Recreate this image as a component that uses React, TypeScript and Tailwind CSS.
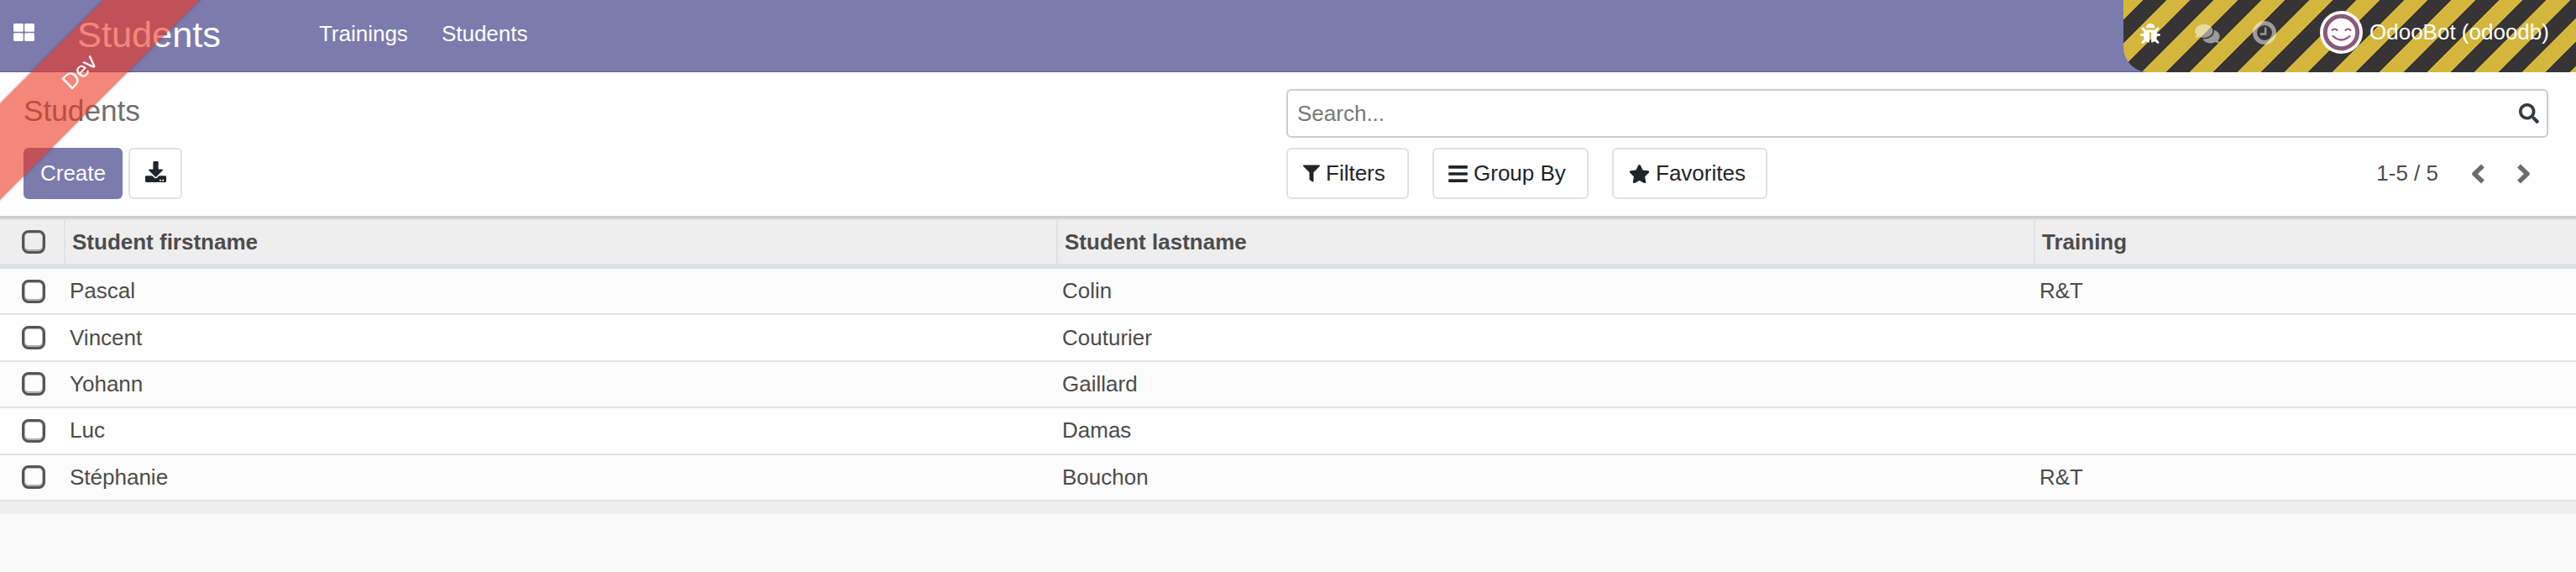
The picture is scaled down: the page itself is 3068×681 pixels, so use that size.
import React from 'react';
import { FaBug, FaComments, FaDownload, FaFilter, FaBars, FaStar, FaSearch } from 'react-icons/fa';

const students = [
  { firstname: 'Pascal', lastname: 'Colin', training: 'R&T' },
  { firstname: 'Vincent', lastname: 'Couturier', training: '' },
  { firstname: 'Yohann', lastname: 'Gaillard', training: '' },
  { firstname: 'Luc', lastname: 'Damas', training: '' },
  { firstname: 'Stéphanie', lastname: 'Bouchon', training: 'R&T' },
];

const Checkbox = () => (
  <span className="block w-7 h-7 rounded-lg border-[3px] border-[#555] shadow-[inset_0_0_0_1px_#b4b7bc,inset_0_-1px_0_1px_#a4a7ad]" />
);

const Avatar = () => (
  <svg viewBox="0 0 51 51" className="w-[51px] h-[51px]">
    <circle cx="25.5" cy="25.5" r="25.5" fill="#fff" />
    <circle cx="25.5" cy="25.5" r="19.2" fill="#fff" stroke="#875a7b" strokeWidth="5" />
    <path d="M14.5 23q3-3 6 0M30.5 23q3-3 6 0" fill="none" stroke="#875a7b" strokeWidth="2" strokeLinecap="round" />
    <path d="M15.5 30q10 9 20 0" fill="none" stroke="#875a7b" strokeWidth="2.2" strokeLinecap="round" />
  </svg>
);

const Chevron = ({ flip }: { flip?: boolean }) => (
  <svg viewBox="0 0 17 24" className={`w-[17px] h-6 ${flip ? 'rotate-180' : ''}`}>
    <path d="M14 2.5 4 12l10 9.5" fill="none" stroke="#6c6c6c" strokeWidth="5.5" strokeLinejoin="round" />
  </svg>
);

const App: React.FC = () => {
  return (
    <div className="min-h-[681px] flex flex-col relative overflow-hidden bg-[#f9f9f9] font-['Liberation_Sans',Arial,sans-serif] text-[26px] text-[#4c4c4c]">
      {/* Navbar */}
      <div className="h-[86px] flex border-b border-[#5f5e90] bg-[#7c7bad] text-white">
        <svg viewBox="0 0 25 21" className="w-[25px] h-[21px] ml-4 mt-[28px]" fill="#fff">
          <rect x="0" y="0" width="11.75" height="9.75" rx="1.5" />
          <rect x="13.25" y="0" width="11.75" height="9.75" rx="1.5" />
          <rect x="0" y="11.25" width="11.75" height="9.75" rx="1.5" />
          <rect x="13.25" y="11.25" width="11.75" height="9.75" rx="1.5" />
        </svg>
        <div className="ml-[51px] text-[43.3px] leading-[83px]">Students</div>
        <div className="ml-[97px] flex leading-[80px]">
          <a className="px-5">Trainings</a>
          <a className="px-5">Students</a>
        </div>

        {/* Debug stripes */}
        <div className="ml-auto w-[539px] h-[86px] shrink-0 flex items-center pl-5 rounded-bl-[30px] bg-[repeating-linear-gradient(135deg,#d4b63d_0,#d4b63d_16.3px,#373435_16.3px,#373435_36.3px,#d4b63d_36.3px,#d4b63d_40px)]">
          <FaBug className="w-6 h-6 -mt-[6px]" />
          <FaComments className="w-8 h-[26px] ml-10 -mt-[6px] opacity-50" />
          <svg viewBox="0 0 28 28" className="w-7 h-7 ml-[38px] -mt-[8px] opacity-50">
            <circle cx="14" cy="14" r="11.5" fill="none" stroke="#fff" strokeWidth="5" />
            <path d="M15.2 7.5v8H9" fill="none" stroke="#fff" strokeWidth="2.4" />
          </svg>
          <div className="ml-[52px] -mt-[9px]"><Avatar /></div>
          <span className="ml-2 -mt-[9px] whitespace-nowrap">OdooBot (odoodb)</span>
        </div>
      </div>

      {/* Control panel */}
      <div className="grid grid-cols-[1504px_1fr] h-[174px] pt-5 pl-7 pr-[33px] bg-white border-b-[3px] border-[#ccc]">
        <div className="flex flex-col gap-3">
          <div className="h-[58px] pt-[5px] text-[35.2px] leading-[42px] text-[#6f6f6f]">Students</div>
          <div className="flex gap-[7px]">
            <button className="w-[118px] h-[61px] rounded-md bg-[#7c7bad] text-white">Create</button>
            <button className="w-16 h-[61px] rounded-md border-2 border-[#dee2e6] bg-white text-[#212529] flex items-center justify-center">
              <FaDownload className="w-[25px] h-[25px] mb-1" />
            </button>
          </div>
        </div>
        <div className="flex flex-col gap-3">
          <div className="h-[58px] flex items-center justify-between pl-[11px] pr-[9px] rounded-md border-2 border-[#ccc] bg-white">
            <span className="text-[#777]">Search...</span>
            <FaSearch className="w-6 h-6 text-[#373c40]" />
          </div>
          <div className="flex items-center text-[#212529]">
            <button className="w-[146px] h-[61px] pl-[18px] rounded-md border-2 border-[#dee2e6] flex items-center gap-[7px]">
              <FaFilter className="w-5 h-[21px]" />Filters
            </button>
            <button className="w-[186px] h-[61px] ml-7 pl-[17px] rounded-md border-2 border-[#dee2e6] flex items-center gap-[7px]">
              <FaBars className="w-[23px] h-[26px]" />Group By
            </button>
            <button className="w-[185px] h-[61px] ml-7 pl-[18px] rounded-md border-2 border-[#dee2e6] flex items-center gap-[7px]">
              <FaStar className="w-[25px] h-6" />Favorites
            </button>
            <div className="ml-auto flex items-center text-[#4c4c4c]">
              <span>1-5 / 5</span>
              <span className="ml-[39px]"><Chevron /></span>
              <span className="ml-[37px] mr-[21px]"><Chevron flip /></span>
            </div>
          </div>
        </div>
      </div>

      {/* List */}
      <div className="bg-white">
        <div className="grid grid-cols-[78px_1182px_1164px_1fr] h-[60px] border-t-2 border-b-[6px] border-[#dee2e6] bg-[#eee] font-bold">
          <div className="flex items-center pl-[26px] border-r-2 border-[#dee2e6]"><Checkbox /></div>
          <div className="flex items-center pl-2 border-r-2 border-[#dee2e6]">Student firstname</div>
          <div className="flex items-center pl-2 border-r-2 border-[#dee2e6]">Student lastname</div>
          <div className="flex items-center pl-2">Training</div>
        </div>
        {students.map((student, index) => (
          <div
            key={index}
            className={`grid grid-cols-[78px_1182px_1164px_1fr] h-[55.4px] items-center border-b-2 border-[#dee2e6] ${index % 2 === 0 ? 'bg-[#fcfcfc]' : 'bg-white'}`}
          >
            <div className="pl-[26px]"><Checkbox /></div>
            <div className="pl-[5px]">{student.firstname}</div>
            <div className="pl-[5px]">{student.lastname}</div>
            <div className="pl-[5px]">{student.training}</div>
          </div>
        ))}
      </div>
      <div className="h-[15px] bg-[#eee]" />

      {/* Dev ribbon */}
      <div className="absolute top-0 left-0 w-[240px] h-[240px] overflow-hidden pointer-events-none">
        <div className="absolute left-[-110px] top-[49.5px] w-[400px] h-[81px] -rotate-45 bg-[rgba(238,53,33,0.6)] shadow-[0_0_4px_rgba(0,0,0,0.3)] flex items-center justify-center pl-[14px] text-white">
          Dev
        </div>
      </div>
    </div>
  );
};

export default App;
